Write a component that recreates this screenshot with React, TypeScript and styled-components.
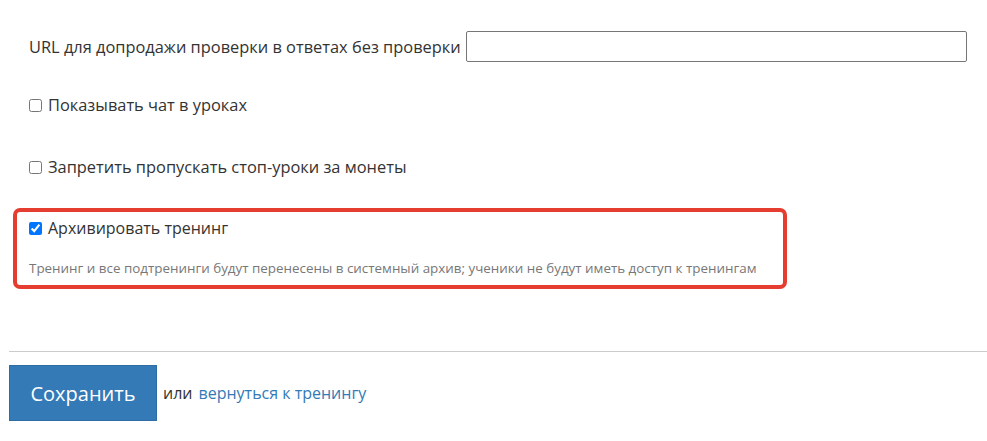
import styled, { createGlobalStyle } from "styled-components";

const GlobalStyle = createGlobalStyle`
  html, body {
    margin: 0;
    padding: 0;
    background: #fff;
  }
  body {
    font-family: "Open Sans", "Liberation Sans", sans-serif;
    color: #333;
  }
`;

const Page = styled.div`
  padding: 0 0 0 9px;
`;

const Form = styled.div`
  display: flex;
  flex-direction: column;
  padding-top: 31px;
`;

const Row = styled.div<{ $gap?: number }>`
  display: flex;
  align-items: center;
  padding-left: 20px;
  margin-bottom: ${(p) => p.$gap ?? 0}px;
  font-size: 16.4px;
  line-height: 20px;
`;

const UrlInput = styled.input`
  box-sizing: border-box;
  width: 501px;
  height: 31px;
  margin-left: 5px;
  border: 1px solid #767676;
  border-radius: 2px;
  padding: 1px 2px;
`;

const CheckLabel = styled.label`
  display: flex;
  align-items: center;
  gap: 6px;
  cursor: pointer;
`;

const Check = styled.input.attrs({ type: "checkbox" })`
  width: 13px;
  height: 13px;
  margin: 0;
  accent-color: #0075ff;
`;

const Highlight = styled.div`
  box-sizing: border-box;
  width: 774px;
  margin-left: 4px;
  border: 4px solid #e53d30;
  border-radius: 7px;
  padding: 6px 12px 8px 12px;
  font-size: 16px;
  line-height: 20px;
`;

const Hint = styled.div`
  margin-top: 21px;
  font-size: 13.4px;
  line-height: 18px;
  color: #777;
`;

const Divider = styled.hr`
  margin: 62px 0 13px;
  border: none;
  border-top: 1px solid #ccc;
`;

const Actions = styled.div`
  display: flex;
  align-items: center;
  gap: 6px;
  font-size: 16px;
`;

const SaveButton = styled.button`
  width: 148px;
  height: 56px;
  background: #337ab7;
  border: 1px solid #2e6da4;
  color: #fff;
  font-family: inherit;
  font-size: 20px;
  border-radius: 0;
  cursor: pointer;
`;

const Link = styled.a`
  color: #337ab7;
  text-decoration: none;
`;

const App: React.FC = () => {
  return (
    <Page>
      <GlobalStyle />
      <Form>
        <Row $gap={33}>
          URL для допродажи проверки в ответах без проверки
          <UrlInput type="text" />
        </Row>
        <Row $gap={42}>
          <CheckLabel>
            <Check />
            Показывать чат в уроках
          </CheckLabel>
        </Row>
        <Row $gap={31}>
          <CheckLabel>
            <Check />
            Запретить пропускать стоп-уроки за монеты
          </CheckLabel>
        </Row>
        <Highlight>
          <CheckLabel>
            <Check defaultChecked />
            Архивировать тренинг
          </CheckLabel>
          <Hint>
            Тренинг и все подтренинги будут перенесены в системный архив; ученики не будут иметь доступ к тренингам
          </Hint>
        </Highlight>
      </Form>
      <Divider />
      <Actions>
        <SaveButton>Сохранить</SaveButton>
        или <Link href="#">вернуться к тренингу</Link>
      </Actions>
    </Page>
  );
};

export default App;
